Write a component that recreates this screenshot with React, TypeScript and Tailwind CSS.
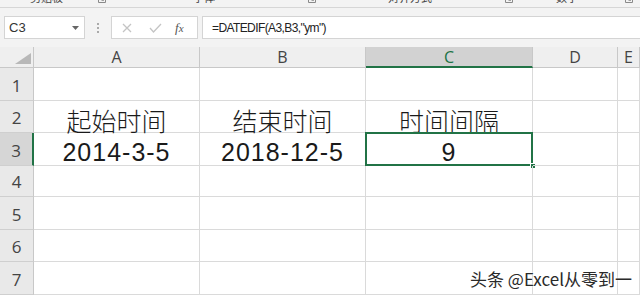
import React from "react";

const cjk = "font-['Noto_Sans_CJK_SC','Noto_Sans',sans-serif]";
const num = "font-['Liberation_Sans','Noto_Sans_CJK_SC',sans-serif]";

const cols = [
  { key: "A", w: "w-[166px]" },
  { key: "B", w: "w-[166px]" },
  { key: "C", w: "w-[167px]" },
  { key: "D", w: "w-[85px]" },
  { key: "E", w: "flex-1" },
];

const rows = [
  { n: 1, h: "h-[33px]" },
  { n: 2, h: "h-[32px]" },
  { n: 3, h: "h-[33px]" },
  { n: 4, h: "h-[31px]" },
  { n: 5, h: "h-[33px]" },
  { n: 6, h: "h-[32px]" },
  { n: 7, h: "h-[33px]" },
];

const data: Record<string, string> = {
  A2: "起始时间",
  B2: "结束时间",
  C2: "时间间隔",
  A3: "2014-3-5",
  B3: "2018-12-5",
  C3: "9",
};

function Launcher() {
  return (
    <svg width="8" height="6" viewBox="0 0 8 6" className="block">
      <path d="M0.5 0 V5.5 H7.5 V0" fill="none" stroke="#8a8a8a" strokeWidth="1" />
      <path d="M3 1 L5.5 3.5 M5.5 1.5 V3.5 H3.5" stroke="#8a8a8a" strokeWidth="0.8" fill="none" />
    </svg>
  );
}

function Ribbon() {
  return (
    <div className={`h-[8px] bg-[#f3f3f3] border-b border-[#d6d6d6] overflow-hidden flex items-start text-[11px] text-[#444] ${cjk}`}>
      <span className="ml-[30px] mt-[-9px] leading-[12px]">剪贴板</span>
      <span className="ml-[35px] mt-[-3px]"><Launcher /></span>
      <span className="ml-[87px] mt-[-9px] leading-[12px]">字体</span>
      <span className="ml-[93px] mt-[-3px]"><Launcher /></span>
      <span className="ml-[72px] mt-[-9px] leading-[12px]">对齐方式</span>
      <span className="ml-[73px] mt-[-3px]"><Launcher /></span>
      <span className="ml-[43px] mt-[-9px] leading-[12px]">数字</span>
      <span className="ml-[47px] mt-[-3px]"><Launcher /></span>
    </div>
  );
}

function FormulaBar() {
  return (
    <div className="h-[39px] bg-[#f3f3f3] flex items-start pt-[8px] font-['Liberation_Sans',sans-serif]">
      <div className="ml-[4px] w-[81px] h-[23px] bg-white border border-[#d4d4d4] flex items-center justify-between pl-[4px] pr-[5px]">
        <span className="text-[13px] text-[#333]">C3</span>
        <svg width="7" height="4" viewBox="0 0 7 4">
          <path d="M0 0 H7 L3.5 4 Z" fill="#666" />
        </svg>
      </div>
      <div className="w-[26px] h-[23px] flex flex-col items-center justify-center gap-[2px]">
        <span className="w-[2px] h-[2px] bg-[#aaa]" />
        <span className="w-[2px] h-[2px] bg-[#aaa]" />
        <span className="w-[2px] h-[2px] bg-[#aaa]" />
      </div>
      <div className="w-[87px] h-[23px] bg-white border border-[#d4d4d4] flex items-center">
        <svg width="10" height="10" viewBox="0 0 10 10" className="ml-[10px]">
          <path d="M1 1 L9 9 M9 1 L1 9" stroke="#c4c4c4" strokeWidth="1.3" />
        </svg>
        <svg width="13" height="10" viewBox="0 0 13 10" className="ml-[17px]">
          <path d="M1 5 L4.5 9 L12 1" stroke="#c4c4c4" strokeWidth="1.3" fill="none" />
        </svg>
        <span className="ml-[13px] text-[13px] italic text-[#555] font-['Liberation_Serif',serif]">
          f<span className="text-[11px]">x</span>
        </span>
      </div>
      <div className="ml-[4px] flex-1 h-[23px] bg-white border border-[#d4d4d4] border-r-0 flex items-center pl-[9px]">
        <span className="text-[12px] tracking-[-0.6px] text-[#222]">=DATEDIF(A3,B3,"ym")</span>
      </div>
    </div>
  );
}

function HeaderRow() {
  return (
    <div className="h-[21px] flex font-['Open_Sans',sans-serif]">
      <div className="w-[34px] h-full bg-[#efefef] border-r border-b border-[#c8c8c8] flex items-end justify-end pr-[2px] pb-[3px]">
        <svg width="16" height="11" viewBox="0 0 16 11">
          <path d="M16 0 V11 H0 Z" fill="#b8b8b8" />
        </svg>
      </div>
      {cols.map((c) => {
        const sel = c.key === "C";
        return (
          <div
            key={c.key}
            className={`${c.w} h-full flex items-center justify-center text-[16px] border-r ${
              sel
                ? "bg-[#d2d2d2] text-[#217346] border-b-2 border-b-[#217346] border-r-[#c8c8c8]"
                : "bg-[#efefef] text-[#444] border-b border-[#c8c8c8]"
            }`}
          >
            {c.key}
          </div>
        );
      })}
    </div>
  );
}

function Sheet() {
  return (
    <div>
      <HeaderRow />
      {rows.map((r) => (
        <div key={r.n} className={`${r.h} flex`}>
          <div
            className={`w-[34px] h-full flex items-end justify-center pb-[2px] text-[17px] font-['Open_Sans',sans-serif] border-b border-[#cfcfcf] ${
              r.n === 3
                ? "bg-[#d6d6d6] text-[#444] border-r-2 border-r-[#217346]"
                : "bg-[#e9e9e9] text-[#444] border-r border-r-[#c8c8c8]"
            }`}
          >
            {r.n}
          </div>
          {cols.map((c) => {
            const id = `${c.key}${r.n}`;
            const v = data[id];
            const sel = id === "C3";
            return (
              <div
                key={id}
                className={`${c.w} h-full relative border-r border-b border-[#dadada] flex items-end justify-center text-[25px] leading-[26px] text-[#1a1a1a]`}
              >
                {v && r.n === 2 && <span className={`${cjk} font-light mb-[-1px]`}>{v}</span>}
                {v && r.n === 3 && <span className={`${num} tracking-[1px]`}>{v}</span>}
                {sel && (
                  <>
                    <div className="absolute -left-[1px] -top-[1px] -right-[1px] -bottom-[1px] border-2 border-[#217346]" />
                    <div className="absolute -right-[4px] -bottom-[4px] w-[6px] h-[6px] bg-[#217346] border border-white" />
                  </>
                )}
              </div>
            );
          })}
        </div>
      ))}
    </div>
  );
}

export default function App() {
  return (
    <div className="w-[640px] h-[295px] overflow-hidden bg-white relative">
      <Ribbon />
      <FormulaBar />
      <Sheet />
      <div
        className={`absolute right-[8px] bottom-[4px] text-[17px] text-[#2a2a2a] ${cjk} [text-shadow:0_0_2px_#fff,0_0_2px_#fff]`}
      >
        头条 @Excel从零到一
      </div>
    </div>
  );
}
